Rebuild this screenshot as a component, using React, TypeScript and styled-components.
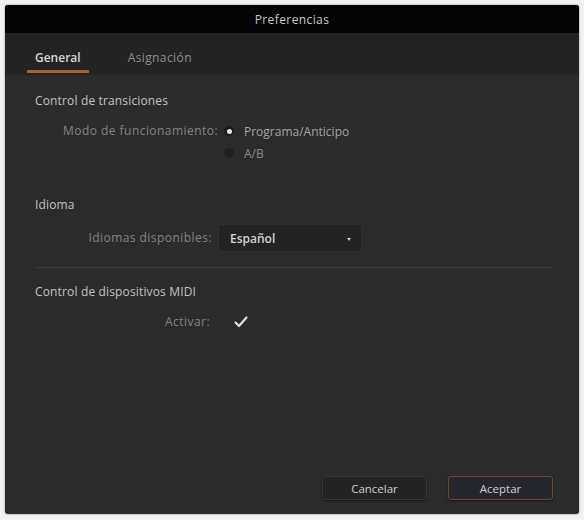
import React from "react";
import styled, { createGlobalStyle } from "styled-components";

const Global = createGlobalStyle`
  html, body { margin: 0; padding: 0; background: #f2f2f2; }
  body { font-family: "Open Sans", "Noto Sans", sans-serif; }
`;

const Page = styled.div`
  width: 584px;
  height: 520px;
  padding: 5px 5px 6px 5px;
  box-sizing: border-box;
  display: flex;
`;

const Window = styled.div`
  flex: 1;
  display: flex;
  flex-direction: column;
  background: #2b2b2b;
  border-radius: 3px;
  overflow: hidden;
  box-shadow: 0 0 2px rgba(0, 0, 0, 0.5);
`;

const TitleBar = styled.div`
  height: 28px;
  flex-shrink: 0;
  background: #050505;
  color: #c8c8c8;
  font-size: 12px;
  letter-spacing: 0.4px;
  display: flex;
  align-items: center;
  justify-content: center;
`;

const TabBar = styled.div`
  height: 42px;
  flex-shrink: 0;
  background: #232323;
  display: flex;
  align-items: flex-start;
  padding: 2px 0 0 22px;
  box-sizing: border-box;
  gap: 31px;
`;

const Tab = styled.div<{ $active?: boolean }>`
  height: 38px;
  padding: 10px 8px 0 8px;
  display: flex;
  align-items: center;
  font-size: 12px;
  letter-spacing: ${(p) => (p.$active ? "0" : "0.4px")};
  color: ${(p) => (p.$active ? "#d6d6d6" : "#8f8f8f")};
  font-weight: ${(p) => (p.$active ? 600 : 400)};
  border-bottom: 3px solid ${(p) => (p.$active ? "#a95f2c" : "transparent")};
  box-sizing: border-box;
  min-width: 61px;
  justify-content: center;
`;

const Body = styled.div`
  flex: 1;
  display: flex;
  flex-direction: column;
  padding: 17px 26px 0 30px;
`;

const Section = styled.div<{ $gap: number }>`
  display: flex;
  flex-direction: column;
  margin-bottom: ${(p) => p.$gap}px;
`;

const SectionTitle = styled.div`
  font-size: 12px;
  letter-spacing: 0.15px;
  color: #c4c4c4;
  height: 18px;
  line-height: 18px;
`;

const Row = styled.div<{ $labelWidth: number; $top: number; $gap: number }>`
  display: grid;
  grid-template-columns: ${(p) => p.$labelWidth}px 1fr;
  column-gap: ${(p) => p.$gap}px;
  align-items: start;
  margin-top: ${(p) => p.$top}px;
`;

const Label = styled.div<{ $h: number }>`
  font-size: 12px;
  letter-spacing: 0.45px;
  color: #858585;
  text-align: right;
  white-space: nowrap;
  height: ${(p) => p.$h}px;
  line-height: ${(p) => p.$h}px;
`;

const RadioList = styled.div`
  display: flex;
  flex-direction: column;
  gap: 6px;
`;

const RadioItem = styled.div<{ $on?: boolean }>`
  display: flex;
  align-items: center;
  gap: 10px;
  height: 16px;
  font-size: 12px;
  color: ${(p) => (p.$on ? "#a4a4a4" : "#8a8a8a")};
`;

const RadioDot = styled.span<{ $on?: boolean }>`
  width: 10px;
  height: 10px;
  border-radius: 50%;
  box-sizing: border-box;
  background: ${(p) => (p.$on ? "#1c1c1c" : "#1f1f1f")};
  display: flex;
  align-items: center;
  justify-content: center;
  &::after {
    content: "";
    width: 5px;
    height: 5px;
    border-radius: 50%;
    background: ${(p) => (p.$on ? "#e6e6e6" : "transparent")};
  }
`;

const Select = styled.div`
  width: 144px;
  height: 28px;
  background: #232323;
  border: 1px solid #2f2f2f;
  box-sizing: border-box;
  display: flex;
  align-items: center;
  justify-content: space-between;
  padding: 0 10px 0 11px;
  font-size: 12px;
  font-weight: 600;
  color: #d2d2d2;
`;

const Caret = styled.span`
  width: 0;
  height: 0;
  border-left: 2.5px solid transparent;
  border-right: 2.5px solid transparent;
  border-top: 3px solid #cfcfcf;
  margin-top: 2px;
`;

const Divider = styled.div`
  height: 1px;
  background: #3a3a3a;
  margin-top: 15px;
`;

const Check = styled.div`
  height: 20px;
  display: flex;
  align-items: center;
  padding-left: 8px;
`;

const Footer = styled.div`
  margin-top: auto;
  display: flex;
  justify-content: flex-end;
  gap: 21px;
  padding: 0 0 14px 0;
`;

const Button = styled.button<{ $primary?: boolean }>`
  width: 105px;
  height: 24px;
  border-radius: 3px;
  background: ${(p) => (p.$primary ? "#25252d" : "#232323")};
  border: 1px solid ${(p) => (p.$primary ? "#6e4a24" : "#363636")};
  box-shadow: 0 1px 2px rgba(0, 0, 0, 0.5);
  color: #cfcfcf;
  font-family: "Open Sans", "Noto Sans", sans-serif;
  font-size: 11.5px;
  padding: 0;
`;

export default function App() {
  return (
    <Page>
      <Global />
      <Window>
        <TitleBar>Preferencias</TitleBar>
        <TabBar>
          <Tab $active>General</Tab>
          <Tab>Asignación</Tab>
        </TabBar>
        <Body>
          <Section $gap={35}>
            <SectionTitle>Control de transiciones</SectionTitle>
            <Row $labelWidth={183} $top={13} $gap={6}>
              <Label $h={16}>Modo de funcionamiento:</Label>
              <RadioList>
                <RadioItem $on>
                  <RadioDot $on />
                  Programa/Anticipo
                </RadioItem>
                <RadioItem>
                  <RadioDot />
                  A/B
                </RadioItem>
              </RadioList>
            </Row>
          </Section>
          <Section $gap={15}>
            <SectionTitle>Idioma</SectionTitle>
            <Row $labelWidth={177} $top={10} $gap={6}>
              <Label $h={28}>Idiomas disponibles:</Label>
              <Select>
                Español
                <Caret />
              </Select>
            </Row>
            <Divider />
          </Section>
          <Section $gap={0}>
            <SectionTitle>Control de dispositivos MIDI</SectionTitle>
            <Row $labelWidth={175} $top={11} $gap={15}>
              <Label $h={20}>Activar:</Label>
              <Check>
                <svg width="16" height="14" viewBox="0 0 16 14">
                  <path d="M2.5 7.5 L6 11 L13.5 2.5" fill="none" stroke="#e0e0e0" strokeWidth="2.2" strokeLinecap="round" strokeLinejoin="round" />
                </svg>
              </Check>
            </Row>
          </Section>
          <Footer>
            <Button>Cancelar</Button>
            <Button $primary>Aceptar</Button>
          </Footer>
        </Body>
      </Window>
    </Page>
  );
}
